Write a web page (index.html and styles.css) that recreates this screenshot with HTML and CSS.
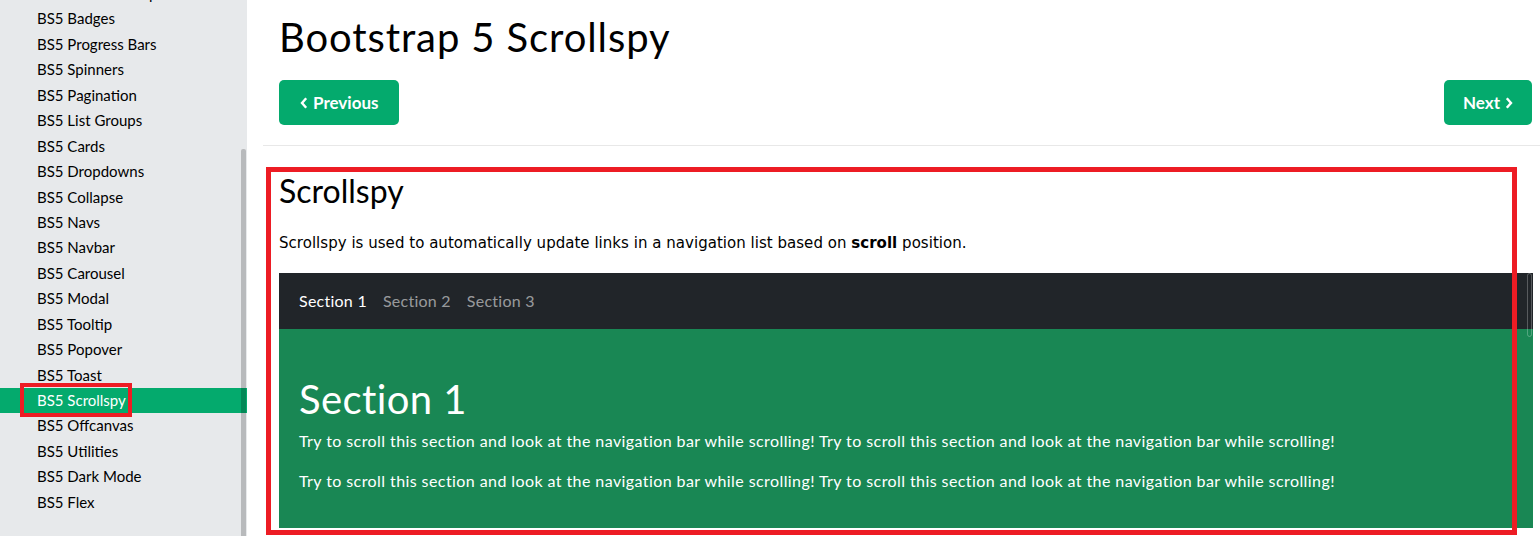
FILE: index.html
```html
<!DOCTYPE html>
<html lang="en">
<head>
<meta charset="utf-8">
<title>Bootstrap 5 Scrollspy</title>
<link rel="stylesheet" href="styles.css">
</head>
<body>
<aside class="sidebar">
  <nav class="menu">
    <a class="item">BS5 Button Groups</a>
    <a class="item">BS5 Badges</a>
    <a class="item">BS5 Progress Bars</a>
    <a class="item">BS5 Spinners</a>
    <a class="item">BS5 Pagination</a>
    <a class="item">BS5 List Groups</a>
    <a class="item">BS5 Cards</a>
    <a class="item">BS5 Dropdowns</a>
    <a class="item">BS5 Collapse</a>
    <a class="item">BS5 Navs</a>
    <a class="item">BS5 Navbar</a>
    <a class="item">BS5 Carousel</a>
    <a class="item">BS5 Modal</a>
    <a class="item">BS5 Tooltip</a>
    <a class="item">BS5 Popover</a>
    <a class="item">BS5 Toast</a>
    <a class="item active">BS5 Scrollspy</a>
    <a class="item">BS5 Offcanvas</a>
    <a class="item">BS5 Utilities</a>
    <a class="item">BS5 Dark Mode</a>
    <a class="item">BS5 Flex</a>
  </nav>
  <div class="side-thumb"></div>
  <div class="side-mark"></div>
</aside>
<main class="main">
  <div class="head">
    <h1 class="title">Bootstrap 5 Scrollspy</h1>
    <div class="pager">
      <a class="btn btn-prev"><svg class="chev" width="8" height="12" viewBox="0 0 8 12"><path d="M6.2 1.2 L2 6 L6.2 10.8" fill="none" stroke="#fff" stroke-width="2.4" stroke-linejoin="miter"/></svg>Previous</a>
      <a class="btn btn-next">Next<svg class="chev" width="8" height="12" viewBox="0 0 8 12"><path d="M1.8 1.2 L6 6 L1.8 10.8" fill="none" stroke="#fff" stroke-width="2.4" stroke-linejoin="miter"/></svg></a>
    </div>
  </div>
  <hr class="rule">
  <section class="content">
    <h2 class="subtitle">Scrollspy</h2>
    <p class="intro">Scrollspy is used to automatically update links in a navigation list based on <b>scroll</b> position.</p>
    <div class="demo">
      <nav class="demo-nav">
        <a class="nav-link active">Section 1</a>
        <a class="nav-link">Section 2</a>
        <a class="nav-link">Section 3</a>
      </nav>
      <div class="section">
        <h1 class="section-title">Section 1</h1>
        <p class="section-text">Try to scroll this section and look at the navigation bar while scrolling! Try to scroll this section and look at the navigation bar while scrolling!</p>
        <p class="section-text">Try to scroll this section and look at the navigation bar while scrolling! Try to scroll this section and look at the navigation bar while scrolling!</p>
      </div>
      <div class="demo-thumb"></div>
    </div>
    <div class="content-mark"></div>
  </section>
</main>
</body>
</html>
```

FILE: styles.css
```css
html, body {
  margin: 0;
  padding: 0;
}
body {
  display: flex;
  height: 536px;
  overflow: hidden;
  background: #fff;
  color: #000;
  font-family: Lato, "Open Sans", sans-serif;
}

/* Sidebar */
.sidebar {
  position: relative;
  width: 247px;
  flex: 0 0 247px;
  background: #e7e9eb;
  overflow: hidden;
}
.menu {
  display: flex;
  flex-direction: column;
  margin-top: -19px;
}
.item {
  display: block;
  height: 25.45px;
  line-height: 25.45px;
  padding-left: 37px;
  font-size: 15px;
  color: #000;
  white-space: nowrap;
}
.item.active {
  background: #04aa6d;
  color: #fff;
}
.side-thumb {
  position: absolute;
  left: 241px;
  top: 149px;
  width: 5px;
  height: 400px;
  background: rgba(0, 0, 0, 0.2);
  border-radius: 2px 2px 0 0;
}
.side-mark {
  position: absolute;
  left: 20px;
  top: 383px;
  width: 104px;
  height: 26px;
  border: 4px solid #ed1c24;
}

/* Main */
.main {
  flex: 1;
  padding-left: 16px;
  min-width: 0;
}
.head {
  padding: 13px 8px 0 16px;
}
.title {
  margin: 0;
  font-size: 40px;
  line-height: 48px;
  font-weight: 400;
  letter-spacing: 0.9px;
}
.pager {
  display: flex;
  justify-content: space-between;
  margin-top: 19px;
}
.btn {
  display: inline-flex;
  align-items: center;
  gap: 5px;
  height: 45px;
  background: #04aa6d;
  color: #fff;
  font-size: 17px;
  font-weight: 700;
  border-radius: 5px;
  box-sizing: border-box;
}
.btn-prev {
  padding: 0 21px;
}
.btn-next {
  padding: 0 19px 0 19px;
}
.chev {
  display: block;
}
.rule {
  margin: 20px 0 0;
  border: 0;
  border-top: 1px solid #e8e8e8;
  height: 0;
}

/* Content */
.content {
  position: relative;
  padding: 26px 7px 0 16px;
}
.subtitle {
  margin: 0;
  font-size: 32px;
  line-height: 38px;
  font-weight: 400;
}
.intro {
  margin: 22px 0 0;
  font-family: "DejaVu Sans", Verdana, sans-serif;
  font-size: 15px;
  line-height: 22.5px;
  letter-spacing: 0.03px;
}
.intro b {
  font-weight: 700;
}
.demo {
  position: relative;
  margin-top: 18px;
  height: 255px;
  overflow: hidden;
  background: #198754;
}
.demo-nav {
  display: flex;
  padding: 16px 12px;
  background: #212529;
}
.nav-link {
  padding: 0 8px;
  font-size: 16px;
  line-height: 24px;
  letter-spacing: 0.25px;
  color: rgba(255, 255, 255, 0.55);
}
.nav-link.active {
  color: #fff;
}
.section {
  padding: 46px 20px 0;
  color: #fff;
}
.section-title {
  margin: 0 0 6px;
  font-size: 40px;
  line-height: 48px;
  font-weight: 400;
  letter-spacing: 0.4px;
}
.section-text {
  margin: 0 0 16px;
  font-size: 16px;
  line-height: 24px;
  letter-spacing: 0.42px;
  white-space: nowrap;
}
.demo-thumb {
  position: absolute;
  right: 1px;
  top: 0;
  width: 3px;
  height: 62px;
  border: 1px solid rgba(255, 255, 255, 0.25);
  border-radius: 3px;
}
.content-mark {
  position: absolute;
  left: 3px;
  top: 21px;
  width: 1241px;
  height: 358px;
  border: 5px solid #ed1c24;
}
```
